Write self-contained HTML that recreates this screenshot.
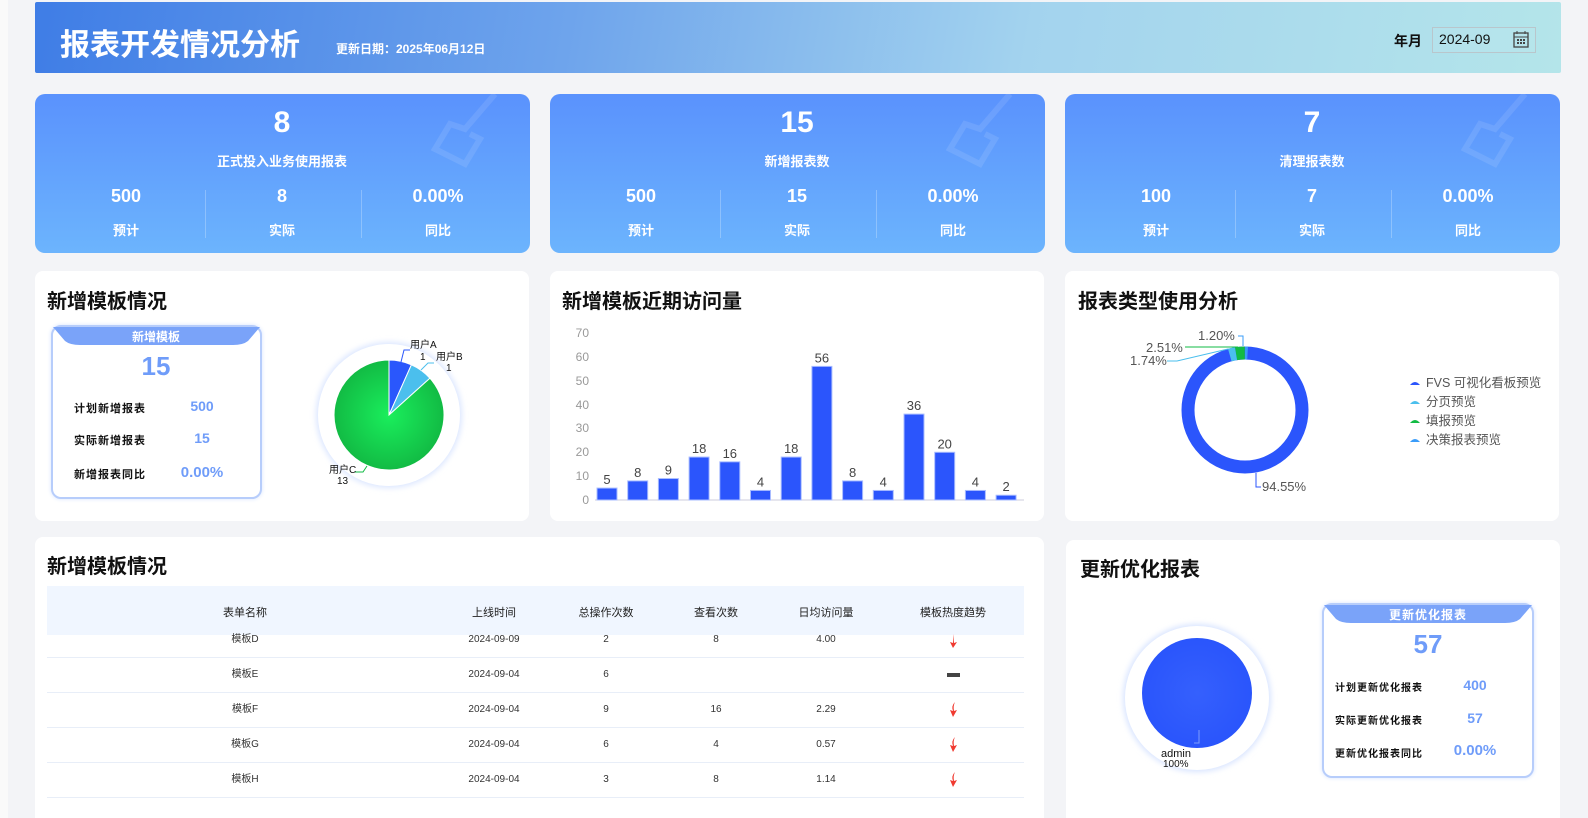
<!DOCTYPE html>
<html><head><meta charset="utf-8"><style>
*{margin:0;padding:0;box-sizing:border-box}
html,body{width:1588px;height:818px;overflow:hidden}
body{background:#f3f4f7;font-family:"Liberation Sans","Noto Sans CJK SC",sans-serif;position:relative}
.abs{position:absolute}
.hdr{left:35px;top:2px;width:1526px;height:71px;border-radius:2px;background:linear-gradient(100deg,#3f7de6 0%,#6ea4ec 35%,#a3d3ee 65%,#b4e5ea 100%)}
.kpi{top:94px;width:495px;height:159px;border-radius:10px;background:linear-gradient(180deg,#5a92fd 0%,#6cb4fd 100%);color:#fff;overflow:hidden}
.c{position:absolute;text-align:center;transform:translateX(-50%);white-space:nowrap}
.panel{background:#fff;border-radius:8px}
.ttl{position:absolute;font-size:20px;font-weight:bold;color:#111}
.card{border:2px solid #b7cdfb;border-radius:10px;background:#fff;box-shadow:0 0 4px #d6e3ff}
.row{position:absolute;font-size:11px;font-weight:bold;color:#111;letter-spacing:1px}
.val{position:absolute;font-weight:bold;color:#6f9cf9;text-align:center;transform:translateX(-50%)}
.th{position:absolute;font-size:11px;color:#222;transform:translateX(-50%);top:604px}
.td{position:absolute;font-size:10px;color:#333;transform:translateX(-50%);line-height:14px;height:14px;white-space:nowrap}
.sep{position:absolute;left:47px;width:977px;height:1px;background:#e8eef8}
</style></head><body>
<div class="abs" style="left:0;top:0;width:8px;height:818px;background:#fafafa"></div>
<div class="abs hdr"></div>
<div class="abs" style="left:60px;top:20px;font-size:30px;font-weight:bold;color:#fff">报表开发情况分析</div>
<div class="abs" style="left:336px;top:40px;font-size:12px;font-weight:bold;color:#fff">更新日期：2025年06月12日</div>
<div class="abs" style="left:1394px;top:31px;font-size:14px;font-weight:bold;color:#111">年月</div>
<div class="abs" style="left:1432px;top:27px;width:104px;height:26px;border:1px solid #b9c6cc;background:rgba(255,255,255,0.05)"></div>
<div class="abs" style="left:1439px;top:31px;font-size:14px;color:#111">2024-09</div>
<svg class="abs" style="left:1513px;top:30px" width="16" height="18" viewBox="0 0 16 18"><rect x="1" y="3" width="14" height="14" fill="none" stroke="#444" stroke-width="1.3"/><line x1="1" y1="7" x2="15" y2="7" stroke="#444"/><line x1="4" y1="1" x2="4" y2="4" stroke="#444"/><line x1="12" y1="1" x2="12" y2="4" stroke="#444"/><g fill="#444"><rect x="4" y="9" width="2" height="2"/><rect x="7" y="9" width="2" height="2"/><rect x="10" y="9" width="2" height="2"/><rect x="4" y="12" width="2" height="2"/><rect x="7" y="12" width="2" height="2"/><rect x="10" y="12" width="2" height="2"/></g></svg>

<!-- KPI cards -->
<div class="abs kpi" style="left:35px">
<svg class="abs" style="left:390px;top:0" width="105" height="90"><g fill="none" stroke="rgba(255,255,255,0.10)" stroke-width="6"><path d="M70 0 L40 35 L25 30 L10 55 L40 70 L55 45 L45 40"/></g></svg>
<div class="c" style="left:247px;top:12px;font-size:30px;font-weight:bold">8</div>
<div class="c" style="left:247px;top:57px;font-size:13px;font-weight:bold">正式投入业务使用报表</div>
<div class="c" style="left:91px;top:92px;font-size:18px;font-weight:bold">500</div>
<div class="c" style="left:247px;top:92px;font-size:18px;font-weight:bold">8</div>
<div class="c" style="left:403px;top:92px;font-size:18px;font-weight:bold">0.00%</div>
<div class="c" style="left:91px;top:126px;font-size:13px;font-weight:bold">预计</div>
<div class="c" style="left:247px;top:126px;font-size:13px;font-weight:bold">实际</div>
<div class="c" style="left:403px;top:126px;font-size:13px;font-weight:bold">同比</div>
<div class="abs" style="left:170px;top:96px;width:1px;height:48px;background:rgba(255,255,255,.25)"></div>
<div class="abs" style="left:326px;top:96px;width:1px;height:48px;background:rgba(255,255,255,.25)"></div>
</div>
<div class="abs kpi" style="left:550px">
<svg class="abs" style="left:390px;top:0" width="105" height="90"><g fill="none" stroke="rgba(255,255,255,0.10)" stroke-width="6"><path d="M70 0 L40 35 L25 30 L10 55 L40 70 L55 45 L45 40"/></g></svg>
<div class="c" style="left:247px;top:12px;font-size:30px;font-weight:bold">15</div>
<div class="c" style="left:247px;top:57px;font-size:13px;font-weight:bold">新增报表数</div>
<div class="c" style="left:91px;top:92px;font-size:18px;font-weight:bold">500</div>
<div class="c" style="left:247px;top:92px;font-size:18px;font-weight:bold">15</div>
<div class="c" style="left:403px;top:92px;font-size:18px;font-weight:bold">0.00%</div>
<div class="c" style="left:91px;top:126px;font-size:13px;font-weight:bold">预计</div>
<div class="c" style="left:247px;top:126px;font-size:13px;font-weight:bold">实际</div>
<div class="c" style="left:403px;top:126px;font-size:13px;font-weight:bold">同比</div>
<div class="abs" style="left:170px;top:96px;width:1px;height:48px;background:rgba(255,255,255,.25)"></div>
<div class="abs" style="left:326px;top:96px;width:1px;height:48px;background:rgba(255,255,255,.25)"></div>
</div>
<div class="abs kpi" style="left:1065px">
<svg class="abs" style="left:390px;top:0" width="105" height="90"><g fill="none" stroke="rgba(255,255,255,0.10)" stroke-width="6"><path d="M70 0 L40 35 L25 30 L10 55 L40 70 L55 45 L45 40"/></g></svg>
<div class="c" style="left:247px;top:12px;font-size:30px;font-weight:bold">7</div>
<div class="c" style="left:247px;top:57px;font-size:13px;font-weight:bold">清理报表数</div>
<div class="c" style="left:91px;top:92px;font-size:18px;font-weight:bold">100</div>
<div class="c" style="left:247px;top:92px;font-size:18px;font-weight:bold">7</div>
<div class="c" style="left:403px;top:92px;font-size:18px;font-weight:bold">0.00%</div>
<div class="c" style="left:91px;top:126px;font-size:13px;font-weight:bold">预计</div>
<div class="c" style="left:247px;top:126px;font-size:13px;font-weight:bold">实际</div>
<div class="c" style="left:403px;top:126px;font-size:13px;font-weight:bold">同比</div>
<div class="abs" style="left:170px;top:96px;width:1px;height:48px;background:rgba(255,255,255,.25)"></div>
<div class="abs" style="left:326px;top:96px;width:1px;height:48px;background:rgba(255,255,255,.25)"></div>
</div>

<!-- row 2 panels -->
<div class="abs panel" style="left:35px;top:271px;width:494px;height:250px"></div>
<div class="abs panel" style="left:550px;top:271px;width:494px;height:250px"></div>
<div class="abs panel" style="left:1065px;top:271px;width:494px;height:250px"></div>
<div class="ttl" style="left:47px;top:285px">新增模板情况</div>
<div class="ttl" style="left:562px;top:285px">新增模板近期访问量</div>
<div class="ttl" style="left:1078px;top:285px">报表类型使用分析</div>

<!-- card 1 -->
<div class="abs card" style="left:51px;top:325px;width:211px;height:174px"></div>
<svg class="abs" style="left:53px;top:327px" width="207" height="20"><path d="M0 0 H207 L195 14 Q190 18 180 18 H27 Q17 18 12 14 Z" fill="#7aa3f9"/></svg>
<div class="c" style="left:156px;top:328px;font-size:12px;font-weight:bold;color:#fff">新增模板</div>
<div class="c" style="left:156px;top:351px;font-size:26px;font-weight:bold;color:#6f9cf9">15</div>
<div class="row" style="left:74px;top:400px">计划新增报表</div>
<div class="val" style="left:202px;top:398px;font-size:14px">500</div>
<div class="row" style="left:74px;top:432px">实际新增报表</div>
<div class="val" style="left:202px;top:430px;font-size:14px">15</div>
<div class="row" style="left:74px;top:466px">新增报表同比</div>
<div class="val" style="left:202px;top:464px;font-size:15px">0.00%</div>

<!-- pie -->
<svg class="abs" style="left:300px;top:330px" width="180" height="170">
<defs><filter id="g"><feGaussianBlur stdDeviation="3"/></filter><radialGradient id="gr"><stop offset="0" stop-color="#1aee5c"/><stop offset="1" stop-color="#12bb44"/></radialGradient></defs>
<circle cx="89" cy="85" r="73" fill="#dbe6ff" filter="url(#g)"/>
<circle cx="89" cy="85" r="71" fill="#fff"/>
<path d="M89 85 L89 30 A55 55 0 0 1 111.4 34.8 Z" fill="#2a57fc" stroke="#fff" stroke-width="1"/>
<path d="M89 85 L111.4 34.8 A55 55 0 0 1 129.9 48.2 Z" fill="#4bbfed" stroke="#fff" stroke-width="1"/>
<path d="M89 85 L129.9 48.2 A55 55 0 1 1 89 30 Z" fill="url(#gr)" stroke="#fff" stroke-width="1"/>
<path d="M101 32 L104 20 L110 20" fill="none" stroke="#2a57fc"/>
<path d="M121 40 L128 33 L134 33" fill="none" stroke="#4bbfed"/>
<path d="M67 136 L63 142 L55 142" fill="none" stroke="#12bb44"/>
<text x="110" y="18" font-size="10" fill="#111">用户A</text>
<text x="120" y="30" font-size="10" fill="#111">1</text>
<text x="136" y="30" font-size="10" fill="#111">用户B</text>
<text x="146" y="41" font-size="10" fill="#111">1</text>
<text x="29" y="143" font-size="10" fill="#111">用户C</text>
<text x="37" y="154" font-size="10" fill="#111">13</text>
</svg>

<!-- bar chart -->
<svg class="abs" style="left:550px;top:320px" width="494" height="195" font-family="Liberation Sans,sans-serif">
<g font-size="12" fill="#999" text-anchor="end">
<text x="39" y="184">0</text><text x="39" y="160">10</text><text x="39" y="136">20</text><text x="39" y="112">30</text><text x="39" y="89">40</text><text x="39" y="65">50</text><text x="39" y="41">60</text><text x="39" y="17">70</text>
</g>
<line x1="45" y1="180" x2="474" y2="180" stroke="#ccd" />
<g fill="#2b55fc" stroke="#a9bcff" stroke-width="1" id="bars"></g>
<g font-size="13" fill="#444" text-anchor="middle" id="lbl"></g>
</svg>
<script>
(function(){var v=[5,8,9,18,16,4,18,56,8,4,36,20,4,2],b=document.getElementById('bars'),l=document.getElementById('lbl'),ns='http://www.w3.org/2000/svg';
v.forEach(function(d,i){var x=47+i*30.7,h=d*2.386,r=document.createElementNS(ns,'rect');r.setAttribute('x',x);r.setAttribute('y',180-h);r.setAttribute('width',20);r.setAttribute('height',h);b.appendChild(r);
var t=document.createElementNS(ns,'text');t.setAttribute('x',x+10);t.setAttribute('y',176-h);t.textContent=d;l.appendChild(t);});})();
</script>

<!-- donut -->
<svg class="abs" style="left:1130px;top:325px" width="200" height="175" font-family="Liberation Sans,sans-serif">
<circle cx="115" cy="85" r="57" fill="none" stroke="#2b55fc" stroke-width="13"/>
<path d="M115 28 A57 57 0 0 1 117.6 28.1" fill="none" stroke="#3a9cf9" stroke-width="13"/>
<path d="M106 28.7 A57 57 0 0 1 114.8 28" fill="none" stroke="#12bb44" stroke-width="13"/>
<path d="M99.8 30.1 A57 57 0 0 1 106 28.7" fill="none" stroke="#4bbfed" stroke-width="13"/>
<path d="M113 21 L113 11 L108 11" fill="none" stroke="#3a9cf9"/>
<path d="M108 22 L105 22 L55 22" fill="none" stroke="#12bb44"/>
<path d="M98 24 L47 36 L37 36" fill="none" stroke="#4bbfed"/>
<path d="M126 148 L126 162 L131 162" fill="none" stroke="#2b55fc"/>
<g font-size="13" fill="#555">
<text x="68" y="15">1.20%</text><text x="16" y="27">2.51%</text><text x="0" y="40">1.74%</text><text x="132" y="166">94.55%</text>
</g>
</svg>
<svg class="abs" style="left:1408px;top:375px" width="170" height="75" font-family="Liberation Sans,Noto Sans CJK SC,sans-serif">
<g><path d="M2 10 Q7 4 12 10 Z" fill="#2b55fc"/><path d="M2 29 Q7 23 12 29 Z" fill="#4bbfed"/><path d="M2 48 Q7 42 12 48 Z" fill="#12bb44"/><path d="M2 67 Q7 61 12 67 Z" fill="#3a9cf9"/></g>
<g font-size="12.5" fill="#555"><text x="18" y="12">FVS 可视化看板预览</text><text x="18" y="31">分页预览</text><text x="18" y="50">填报预览</text><text x="18" y="69">决策报表预览</text></g>
</svg>

<!-- row 3 -->
<div class="abs panel" style="left:35px;top:537px;width:1009px;height:290px"></div>
<div class="abs panel" style="left:1066px;top:540px;width:494px;height:290px"></div>
<div class="ttl" style="left:47px;top:550px">新增模板情况</div>
<div class="ttl" style="left:1080px;top:553px">更新优化报表</div>

<div class="abs" style="left:47px;top:586px;width:977px;height:49px;background:#f0f6ff"></div>
<div class="th" style="left:245px">表单名称</div><div class="th" style="left:494px">上线时间</div><div class="th" style="left:606px">总操作次数</div><div class="th" style="left:716px">查看次数</div><div class="th" style="left:826px">日均访问量</div><div class="th" style="left:953px">模板热度趋势</div>
<div class="sep" style="top:657px"></div><div class="sep" style="top:692px"></div><div class="sep" style="top:727px"></div><div class="sep" style="top:762px"></div><div class="sep" style="top:797px"></div>

<div class="td" style="left:245px;top:633px">模板D</div><div class="td" style="left:494px;top:633px">2024-09-09</div><div class="td" style="left:606px;top:633px">2</div><div class="td" style="left:716px;top:633px">8</div><div class="td" style="left:826px;top:633px">4.00</div>
<div class="td" style="left:245px;top:668px">模板E</div><div class="td" style="left:494px;top:668px">2024-09-04</div><div class="td" style="left:606px;top:668px">6</div>
<div class="td" style="left:245px;top:703px">模板F</div><div class="td" style="left:494px;top:703px">2024-09-04</div><div class="td" style="left:606px;top:703px">9</div><div class="td" style="left:716px;top:703px">16</div><div class="td" style="left:826px;top:703px">2.29</div>
<div class="td" style="left:245px;top:738px">模板G</div><div class="td" style="left:494px;top:738px">2024-09-04</div><div class="td" style="left:606px;top:738px">6</div><div class="td" style="left:716px;top:738px">4</div><div class="td" style="left:826px;top:738px">0.57</div>
<div class="td" style="left:245px;top:773px">模板H</div><div class="td" style="left:494px;top:773px">2024-09-04</div><div class="td" style="left:606px;top:773px">3</div><div class="td" style="left:716px;top:773px">8</div><div class="td" style="left:826px;top:773px">1.14</div>
<svg class="abs" style="left:947px;top:634px" width="12" height="16"><path d="M7 0 L6 9 L3 8 L6 14 L10 8 L7 9 Z" fill="#f03a30"/></svg>
<div class="abs" style="left:947px;top:673px;width:13px;height:4px;background:#444"></div>
<svg class="abs" style="left:947px;top:702px" width="12" height="16"><path d="M8 0 Q4 4 6 9 L3 8 L6 15 L10 8 L7 9 Q6 4 8 0 Z" fill="#f03a30"/></svg>
<svg class="abs" style="left:947px;top:737px" width="12" height="16"><path d="M8 0 Q4 4 6 9 L3 8 L6 15 L10 8 L7 9 Q6 4 8 0 Z" fill="#f03a30"/></svg>
<svg class="abs" style="left:947px;top:772px" width="12" height="16"><path d="M8 0 Q4 4 6 9 L3 8 L6 15 L10 8 L7 9 Q6 4 8 0 Z" fill="#f03a30"/></svg>

<!-- bottom right -->
<svg class="abs" style="left:1115px;top:615px" width="170" height="170" font-family="Liberation Sans,sans-serif">
<defs><filter id="g2"><feGaussianBlur stdDeviation="3"/></filter><radialGradient id="bl"><stop offset="0" stop-color="#3560fd"/><stop offset="1" stop-color="#2a55fc"/></radialGradient></defs>
<circle cx="82" cy="83" r="74" fill="#d8e4ff" filter="url(#g2)"/>
<circle cx="82" cy="83" r="72" fill="#fff"/>
<circle cx="82" cy="78" r="55" fill="url(#bl)"/>
<path d="M84 115 L84 128 L79 128" fill="none" stroke="#7d9cfc"/>
<text x="46" y="142" font-size="11" fill="#111">admin</text>
<text x="48" y="152" font-size="10" fill="#111">100%</text>
</svg>
<div class="abs card" style="left:1322px;top:603px;width:212px;height:175px"></div>
<svg class="abs" style="left:1324px;top:605px" width="208" height="20"><path d="M0 0 H208 L196 14 Q191 18 181 18 H27 Q17 18 12 14 Z" fill="#7aa3f9"/></svg>
<div class="c" style="left:1428px;top:606px;font-size:12px;font-weight:bold;color:#fff;letter-spacing:1px">更新优化报表</div>
<div class="c" style="left:1428px;top:629px;font-size:26px;font-weight:bold;color:#6f9cf9">57</div>
<div class="row" style="left:1335px;top:679px;font-size:10px">计划更新优化报表</div>
<div class="val" style="left:1475px;top:677px;font-size:14px">400</div>
<div class="row" style="left:1335px;top:712px;font-size:10px">实际更新优化报表</div>
<div class="val" style="left:1475px;top:710px;font-size:14px">57</div>
<div class="row" style="left:1335px;top:745px;font-size:10px">更新优化报表同比</div>
<div class="val" style="left:1475px;top:742px;font-size:15px">0.00%</div>
</body></html>
